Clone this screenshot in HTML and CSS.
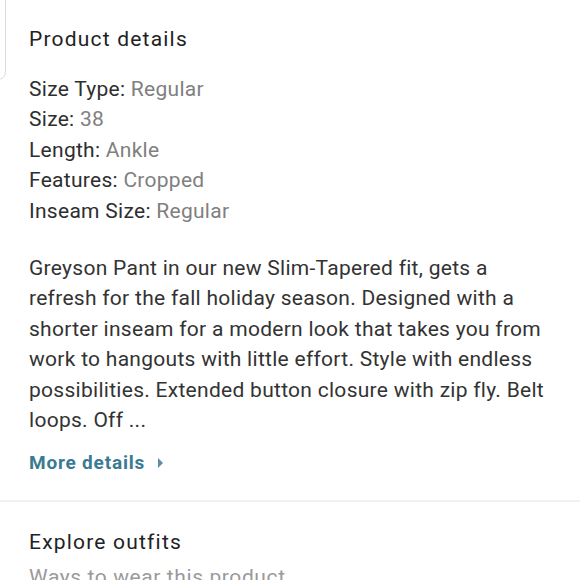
FILE: index.html
```html
<!DOCTYPE html>
<html lang="en">
<head>
    <meta charset="UTF-8">
    <meta name="viewport" content="width=device-width, initial-scale=1.0">
    <title>Product details</title>
    <link rel="stylesheet" href="styles.css">
</head>
<body>
    <div class="page">
        <div class="prev-card"></div>

        <section class="section details">
            <h2 class="section-title">Product details</h2>

            <ul class="attrs">
                <li><span class="attr-label">Size Type:</span> <span class="attr-value">Regular</span></li>
                <li><span class="attr-label">Size:</span> <span class="attr-value">38</span></li>
                <li><span class="attr-label">Length:</span> <span class="attr-value">Ankle</span></li>
                <li><span class="attr-label">Features:</span> <span class="attr-value">Cropped</span></li>
                <li><span class="attr-label">Inseam Size:</span> <span class="attr-value">Regular</span></li>
            </ul>

            <p class="description">Greyson Pant in our new Slim-Tapered fit, gets a refresh for the fall holiday season. Designed with a shorter inseam for a modern look that takes you from work to hangouts with little effort. Style with endless possibilities. Extended button closure with zip fly. Belt loops. Off ...</p>

            <a class="more-link" href="#">
                More details
                <svg class="more-arrow" width="8" height="10" viewBox="0 0 8 10">
                    <path d="M1 0 L6 5 L1 10 Z" fill="currentColor"/>
                </svg>
            </a>
        </section>

        <section class="section outfits">
            <h2 class="section-title">Explore outfits</h2>
            <p class="subtitle">Ways to wear this product</p>
        </section>
    </div>
</body>
</html>
```

FILE: styles.css
```css
html, body {
    margin: 0;
    padding: 0;
    background: #fff;
}
body {
    font-family: Roboto, "Noto Sans", Arial, sans-serif;
    color: #262626;
    height: 580px;
    overflow: hidden;
}
.page {
    position: relative;
}
/* edge of the card on the left, mostly off screen */
.prev-card {
    position: absolute;
    left: -12px;
    top: -12px;
    width: 16px;
    height: 90px;
    border: 1px solid #dcdcdc;
    border-radius: 8px;
}
.section {
    padding: 0 29px;
}
.details {
    padding-top: 24px;
    padding-bottom: 22px;
    border-bottom: 2px solid #f1f1f1;
}
.section-title {
    margin: 0;
    font-size: 21px;
    font-weight: 400;
    line-height: 30px;
    letter-spacing: 1.2px;
    color: #222;
}
.attrs {
    list-style: none;
    margin: 20px 0 0;
    padding: 0;
    font-size: 21px;
    letter-spacing: 0.28px;
    line-height: 30.4px;
}
.attr-label {
    color: #2e2e2e;
}
.attr-value {
    color: #808080;
}
.description {
    margin: 27px 0 0;
    font-size: 21px;
    letter-spacing: 0.28px;
    line-height: 30.4px;
    color: #333;
}
.more-link {
    display: inline-flex;
    align-items: center;
    gap: 12px;
    margin-top: 13px;
    font-size: 19px;
    font-weight: 700;
    letter-spacing: 0.8px;
    line-height: 30px;
    color: #3b7a93;
    text-decoration: none;
}
.more-arrow {
    color: #5d8ea3;
}
.outfits {
    padding-top: 25px;
}
.subtitle {
    margin: 5px 0 0;
    font-size: 21px;
    letter-spacing: 0.6px;
    line-height: 30px;
    color: #9a9a9a;
}
```
